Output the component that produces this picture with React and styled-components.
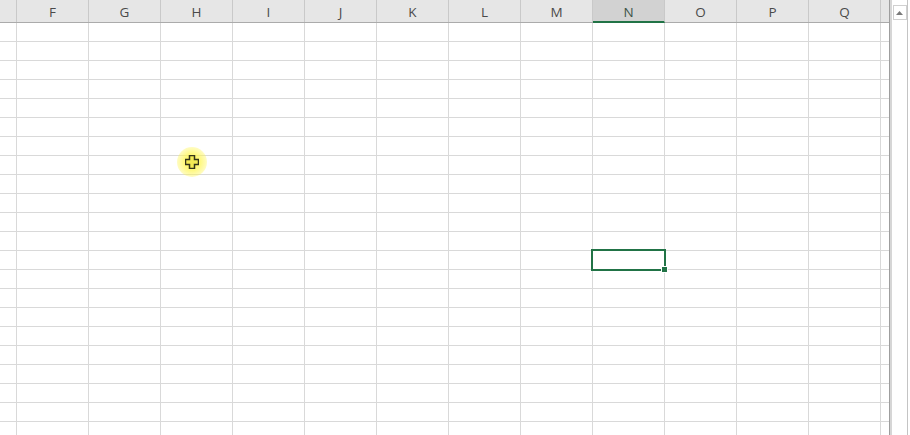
import React from "react"
import styled, { createGlobalStyle } from "styled-components"

const GlobalStyle = createGlobalStyle`
    html, body {
        margin: 0;
        padding: 0;
        background: #ffffff;
        overflow: hidden;
    }
`

const COLUMNS = ["", "F", "G", "H", "I", "J", "K", "L", "M", "N", "O", "P", "Q", ""]
const ROW_COUNT = 22
const SELECTED = { row: 12, col: 9 }

const GRID = "17px repeat(12, 72px) 8px"

const Window = styled.div`
    display: flex;
    width: 910px;
    height: 435px;
    overflow: hidden;
    font-family: "Open Sans", "Liberation Sans", Arial, sans-serif;
`

const Sheet = styled.div`
    position: relative;
    width: 889px;
    flex: none;
    overflow: hidden;
`

const HeaderRow = styled.div`
    display: grid;
    grid-template-columns: ${GRID};
    height: 23px;
    background: #e6e6e6;
    border-bottom: 1px solid #ababab;
    box-sizing: border-box;
`

const HeaderCell = styled.div`
    box-sizing: border-box;
    border-right: ${props => props.last ? "none" : "1px solid #c9c9c9"};
    background: ${props => props.active ? "#d2d2d2" : "transparent"};
    border-bottom: ${props => props.active ? "2px solid #217346" : "none"};
    margin-bottom: ${props => props.active ? "-1px" : "0"};
    color: ${props => props.active ? "#3e5548" : "#4a4a4a"};
    font-size: 13.5px;
    line-height: 14px;
    text-align: center;
    padding-top: 5px;
`

const Row = styled.div`
    display: grid;
    grid-template-columns: ${GRID};
    height: 19px;
`

const Cell = styled.div`
    position: relative;
    box-sizing: border-box;
    border-right: ${props => props.last ? "none" : "1px solid #d9d9d9"};
    border-bottom: 1px solid #d9d9d9;
`

const Selection = styled.div`
    position: absolute;
    left: -2px;
    top: -2px;
    right: -2px;
    bottom: -2px;
    border: 2px solid #217346;
    z-index: 2;
`

const FillHandle = styled.div`
    position: absolute;
    right: -4px;
    bottom: -4px;
    width: 5px;
    height: 5px;
    background: #217346;
    border: 1px solid #ffffff;
`

const Pointer = styled.div`
    position: absolute;
    left: 177px;
    top: 147px;
    width: 30px;
    height: 30px;
    border-radius: 50%;
    background: radial-gradient(circle, rgba(255, 244, 50, 0.9) 0%, rgba(255, 246, 80, 0.7) 40%, rgba(255, 250, 140, 0) 100%);
    display: flex;
    align-items: center;
    justify-content: center;
    z-index: 3;
`

const Scrollbar = styled.div`
    flex: 1;
    display: flex;
    flex-direction: column;
    align-items: center;
    box-sizing: border-box;
    border-left: 1px solid #9e9e9e;
    border-right: 1px solid #c4c4c4;
    box-shadow: inset 2px 0 0 #d6d6d6;
    background: #ffffff;
    padding-top: 5px;
    margin-right: 2px;
`

const ScrollButton = styled.div`
    width: 14px;
    height: 15px;
    box-sizing: border-box;
    border: 1px solid #d0d0d0;
    margin-left: 2px;
    display: flex;
    align-items: center;
    justify-content: center;
`

function PlusCursor() {
    return (
        <svg width="14" height="14" viewBox="0 0 14 14">
            <path
                d="M4.5 0.5 H9.5 V4.5 H13.5 V9.5 H9.5 V13.5 H4.5 V9.5 H0.5 V4.5 H4.5 Z"
                fill="#f3ea55"
                stroke="#34341a"
                strokeWidth="1.5"
            />
        </svg>
    )
}

export default function App() {
    const rows = Array.from({ length: ROW_COUNT }, (_, i) => i)

    return (
        <>
            <GlobalStyle />
            <Window>
                <Sheet>
                    <HeaderRow>
                        {COLUMNS.map((name, i) => (
                            <HeaderCell
                                key={i}
                                active={i === SELECTED.col}
                                last={i === COLUMNS.length - 1}
                            >
                                {name}
                            </HeaderCell>
                        ))}
                    </HeaderRow>
                    {rows.map(r => (
                        <Row key={r}>
                            {COLUMNS.map((_, c) => (
                                <Cell key={c} last={c === COLUMNS.length - 1}>
                                    {r === SELECTED.row && c === SELECTED.col && (
                                        <Selection>
                                            <FillHandle />
                                        </Selection>
                                    )}
                                </Cell>
                            ))}
                        </Row>
                    ))}
                    <Pointer>
                        <PlusCursor />
                    </Pointer>
                </Sheet>
                <Scrollbar>
                    <ScrollButton>
                        <svg width="7" height="4" viewBox="0 0 7 4">
                            <path d="M0 4 L3.5 0 L7 4 Z" fill="#7a7a7a" />
                        </svg>
                    </ScrollButton>
                </Scrollbar>
            </Window>
        </>
    )
}
